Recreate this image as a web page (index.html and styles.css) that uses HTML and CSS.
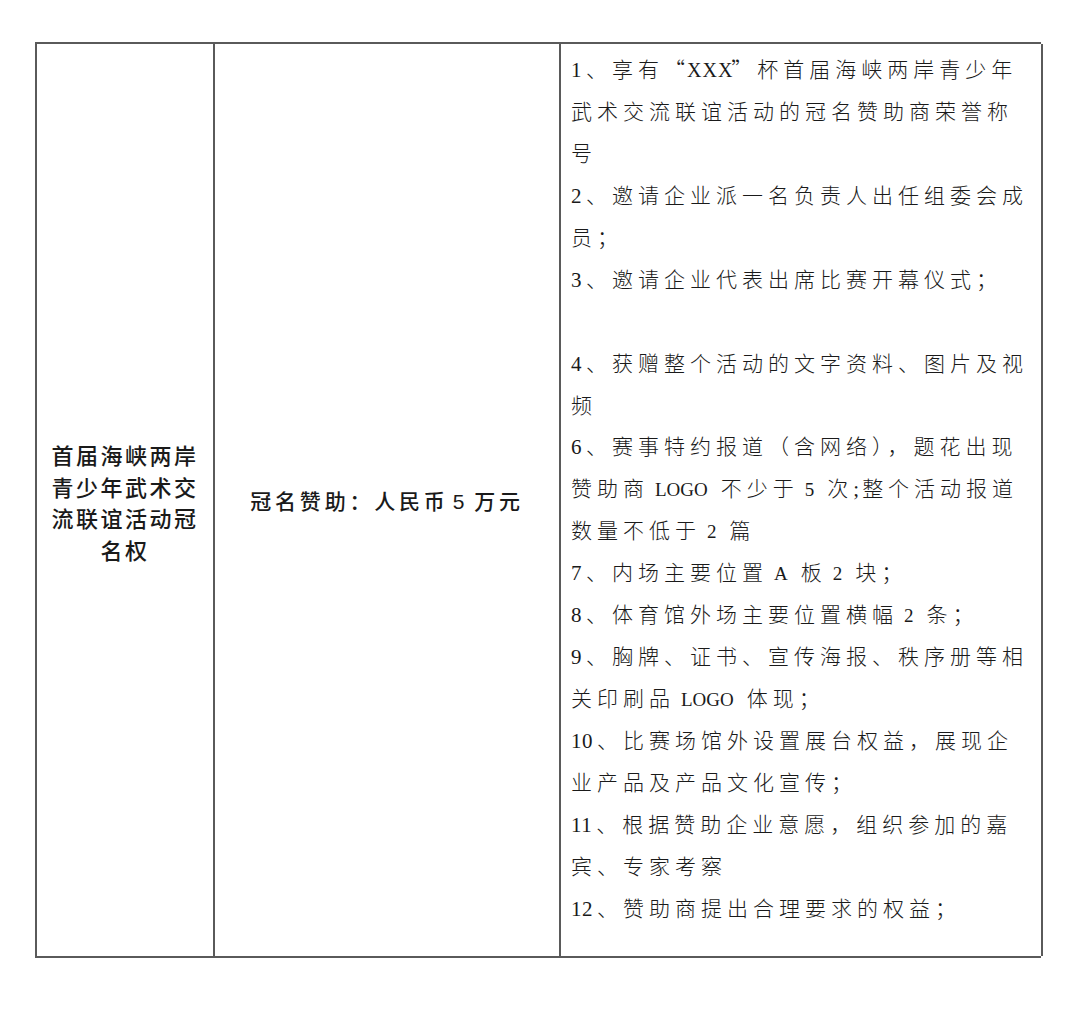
FILE: index.html
```html
<!DOCTYPE html>
<html lang="zh-CN">
<head>
<meta charset="utf-8">
<link rel="stylesheet" href="styles.css">
</head>
<body>
<div class="page">
  <div class="table">
    <div class="cell c1">
      <div class="title">首届海峡两岸<br>青少年武术交<br>流联谊活动冠<br>名权</div>
    </div>
    <div class="cell c2">
      <div class="price">冠名赞助：人民币<span class="pn">5</span>万元</div>
    </div>
    <div class="cell c3">
      <div class="line"><span class="n">1</span>、享有“<span class="x">XXX</span>”杯首届海峡两岸青少年</div>
      <div class="line">武术交流联谊活动的冠名赞助商荣誉称</div>
      <div class="line">号</div>
      <div class="line"><span class="n">2</span>、邀请企业派一名负责人出任组委会成</div>
      <div class="line">员；</div>
      <div class="line"><span class="n">3</span>、邀请企业代表出席比赛开幕仪式；</div>
      <div class="line">&nbsp;</div>
      <div class="line"><span class="n">4</span>、获赠整个活动的文字资料、图片及视</div>
      <div class="line">频</div>
      <div class="line"><span class="n">6</span>、赛事特约报道（含网络），题花出现</div>
      <div class="line">赞助商<span class="n m">LOGO</span>不少于<span class="n m">5</span>次<span class="sc">;</span>整个活动报道</div>
      <div class="line">数量不低于<span class="n m">2</span>篇</div>
      <div class="line"><span class="n">7</span>、内场主要位置<span class="n m">A</span>板<span class="n m">2</span>块；</div>
      <div class="line"><span class="n">8</span>、体育馆外场主要位置横幅<span class="n m">2</span>条；</div>
      <div class="line"><span class="n">9</span>、胸牌、证书、宣传海报、秩序册等相</div>
      <div class="line">关印刷品<span class="n m">LOGO</span>体现；</div>
      <div class="line"><span class="n">10</span>、比赛场馆外设置展台权益，展现企</div>
      <div class="line">业产品及产品文化宣传；</div>
      <div class="line"><span class="n">11</span>、根据赞助企业意愿，组织参加的嘉</div>
      <div class="line">宾、专家考察</div>
      <div class="line"><span class="n">12</span>、赞助商提出合理要求的权益；</div>
    </div>
  </div>
</div>
</body>
</html>
```

FILE: styles.css
```css
html, body {
  margin: 0;
  padding: 0;
  background: #ffffff;
}
.page {
  padding: 42px 0 0 35px;
  width: 1080px;
  height: 1024px;
  box-sizing: border-box;
}
.table {
  display: grid;
  grid-template-columns: 178px 346px 482px;
  width: 1006px;
  height: 916px;
  box-sizing: border-box;
  border-top: 2px solid #5a5a5a;
  border-bottom: 2px solid #5a5a5a;
  border-left: 2px solid #5a5a5a;
  color: #1a1a1a;
}
.cell {
  border-right: 2px solid #5a5a5a;
  box-sizing: border-box;
}
.c1, .c2 {
  display: flex;
  align-items: center;
  justify-content: center;
}
.title {
  font-family: "Noto Sans CJK SC", sans-serif;
  font-weight: 500;
  font-size: 22px;
  line-height: 31.5px;
  letter-spacing: 2.5px;
  text-align: center;
  margin-top: 4px;
}
.price {
  font-family: "Noto Sans CJK SC", sans-serif;
  font-weight: 500;
  font-size: 21px;
  letter-spacing: 3.8px;
  white-space: nowrap;
}
.pn {
  font-family: "Liberation Sans", sans-serif;
  margin: 0 6px 0 4px;
}
.c3 {
  padding: 4px 0 0 10px;
}
.line {
  font-family: "Noto Sans CJK SC", serif;
  font-weight: 300;
  font-size: 21px;
  line-height: 41.95px;
  height: 41.95px;
  letter-spacing: 5px;
  white-space: nowrap;
}
.n, .x, .sc {
  line-height: 1;
}
.n {
  font-family: "Liberation Serif", serif;
  font-weight: 400;
  letter-spacing: 0.5px;
  margin-right: 4px;
}
.n.m {
  font-size: 19px;
  letter-spacing: 0;
  margin-left: 6px;
  margin-right: 13px;
}
.x {
  font-family: "Liberation Serif", serif;
  font-weight: 400;
  font-size: 20px;
  letter-spacing: 1px;
  margin: 0 -2px 0 -3px;
}
.sc {
  font-family: "Liberation Serif", serif;
  letter-spacing: 3px;
}
```
